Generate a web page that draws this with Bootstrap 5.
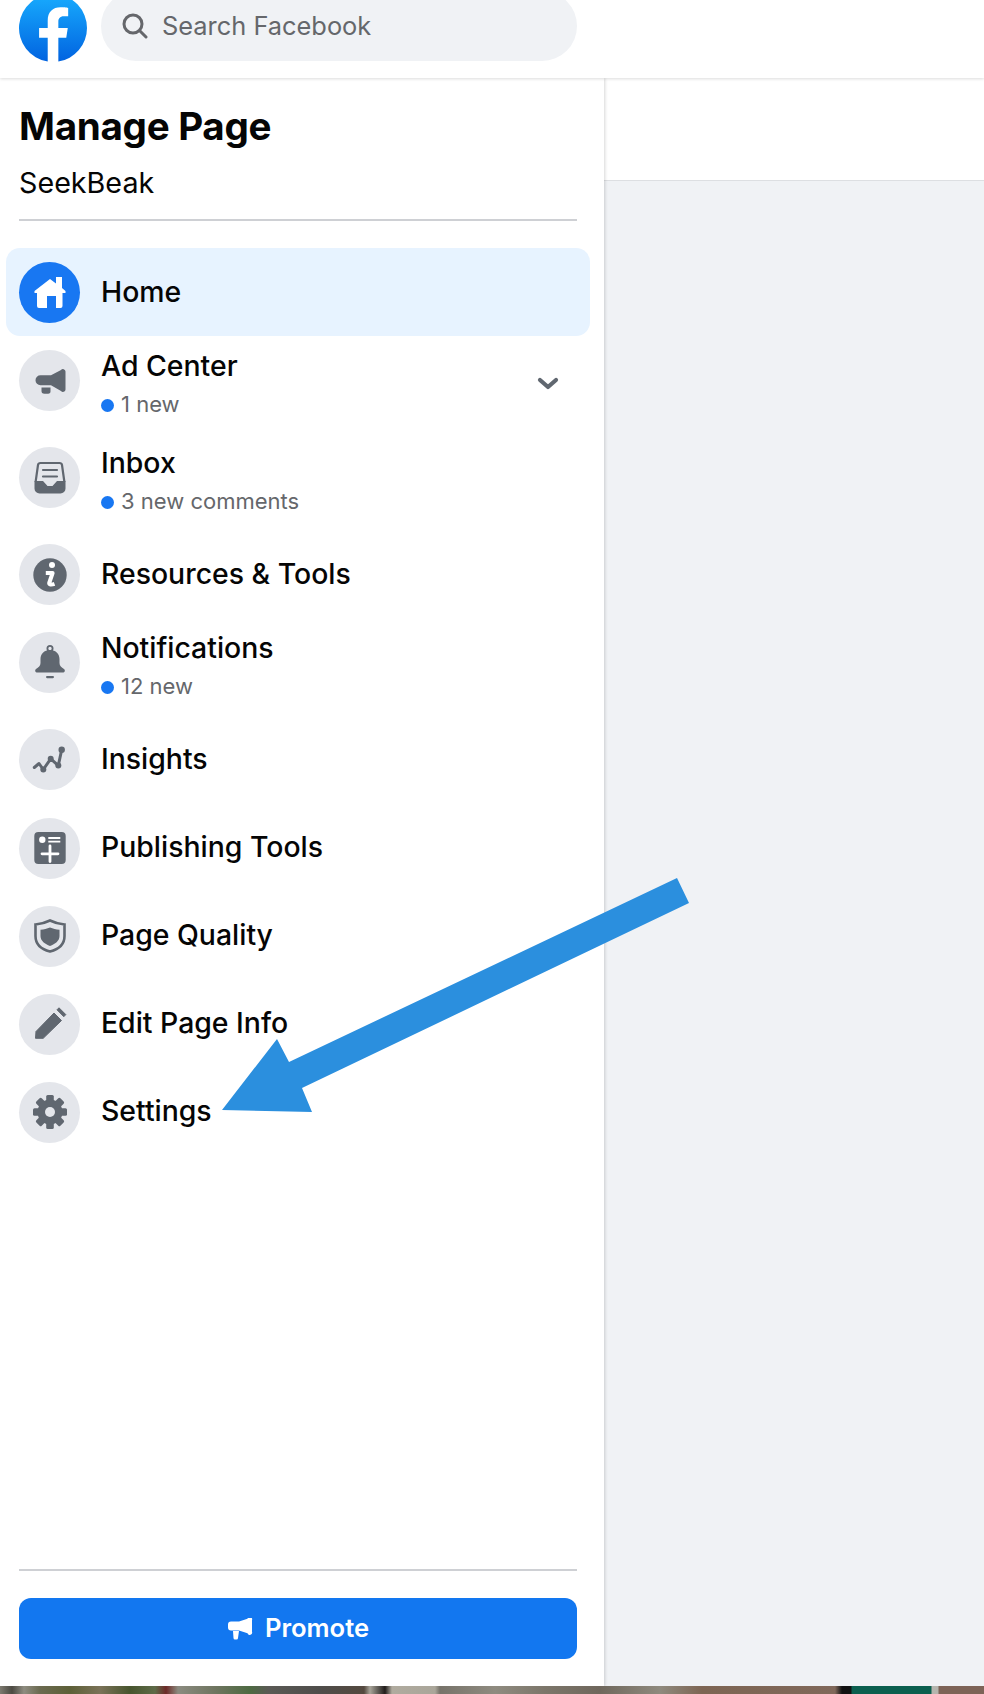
<!DOCTYPE html>
<html lang="en">
<head>
<meta charset="utf-8">
<title>Manage Page</title>
<link href="https://cdn.jsdelivr.net/npm/bootstrap@5.3.0/dist/css/bootstrap.min.css" rel="stylesheet">
<style>
html,body{height:100%;}
body{font-family:"Inter","Liberation Sans",sans-serif;background:#f0f2f5;color:#050505;}
.fb-page{height:1694px;overflow:hidden;}
.fb-top{height:78px;background:#fff;box-shadow:0 1px 3px rgba(0,0,0,.14);z-index:3;padding-left:19px;overflow:hidden;flex:none;}
.fb-logo{width:68px;height:68px;margin-top:-6px;flex:none;}
.fb-search{width:476px;height:70px;margin-top:-9px;margin-left:14px;background:#f0f2f5;padding-left:21px;gap:14px;color:#65676b;font-size:25.4px;}
.fb-side{width:604px;background:#fff;box-shadow:1px 0 3px rgba(0,0,0,.16);z-index:2;padding:0 14px 27px 6px;flex:none;}
.fb-title{font-size:38.6px;line-height:44px;font-weight:700;margin:26px 0 0 13px;letter-spacing:-.3px;}
.fb-sub{font-size:28.7px;line-height:32px;margin:19px 0 0 13px;}
.fb-rule{height:2px;background:#ced0d4;margin:0 13px;flex:none;}
.fb-rule-head{margin-top:20px;margin-bottom:27px;}
.fb-row{padding:14px 13px 13.1px;gap:21px;font-size:28.4px;font-weight:450;line-height:32px;}
.fb-label{padding-bottom:2px;}
.fb-row.is-on{background:#e7f3ff;border-radius:14px;}
.fb-ico{width:61px;height:61px;border-radius:50%;background:#e4e6eb;flex:none;color:#606770;}
.is-on .fb-ico{background:#1877f2;color:#fff;}
.fb-note{font-size:22px;font-weight:400;line-height:33px;margin-top:6px;margin-bottom:-1px;color:#65676b;gap:7px;}
.fb-dot{width:13px;height:13px;border-radius:50%;background:#1877f2;flex:none;margin-top:2px;}
.fb-chev{margin-right:18px;margin-top:-2px;}
.fb-promote{height:61px;margin:27px 13px 0;background:#1277f0;border:0;border-radius:12px;font-size:25.6px;font-weight:600;gap:12px;flex:none;}
.fb-promote:hover{background:#1277f0;}
.fb-bar{height:103px;background:#fff;border-bottom:1px solid #dddfe2;}
.fb-strip{height:8px;flex:none;z-index:4;background:linear-gradient(90deg,#7d7a70 0,#4c4a42 12px,#8e8c80 24px,#6b6a50 40px,#5d6038 70px,#7b7258 100px,#47552e 130px,#5e6b48 155px,#6d2a28 166px,#8b8b80 178px,#6f7560 215px,#4e6a42 250px,#5a5a55 268px,#4f4d4b 320px,#54493f 364px,#a8a499 370px,#201c1a 385px,#b0ab9f 392px,#aaa69a 435px,#77736a 440px,#8f8b80 495px,#7c766a 545px,#6f675c 600px,#8f8a7e 660px,#7d6553 702px,#80685a 835px,#111 842px,#111 851px,#0b5f4f 852px,#0b5f4f 931px,#b5b5ae 932px,#b5b5ae 938px,#7d6357 939px,#7d6357 984px);}
.fb-fill{min-height:0;}
.fb-arrow{position:absolute;left:0;top:0;z-index:5;pointer-events:none;}
</style>
</head>
<body>
<div class="fb-page d-flex flex-column position-relative">
  <header class="fb-top d-flex align-items-start position-relative">
    <svg class="fb-logo" viewBox="0 0 36 36" role="img" aria-label="Facebook"><defs><linearGradient id="fbg" x1="0" y1="0" x2="0" y2="1"><stop offset="0" stop-color="#18acfe"/><stop offset="1" stop-color="#0163e0"/></linearGradient></defs><path fill="url(#fbg)" d="M36 18a18 18 0 1 0-20.8 17.78V23.2h-4.57V18h4.57v-3.96c0-4.51 2.69-7 6.8-7 1.97 0 4.03.35 4.03.35v4.43h-2.27c-2.24 0-2.93 1.39-2.93 2.81V18h4.99l-.8 5.2h-4.19v12.58A18 18 0 0 0 36 18z"/></svg>
    <div class="fb-search d-flex align-items-center rounded-pill">
      <svg width="26" height="26" viewBox="0 0 26 26" fill="none" stroke="#65676b" stroke-width="3" stroke-linecap="round"><circle cx="11" cy="11" r="9"/><path d="M18 18l6 6"/></svg>
      <span>Search Facebook</span>
    </div>
  </header>
  <div class="d-flex flex-grow-1 fb-fill">
    <aside class="fb-side d-flex flex-column">
      <div class="fb-title">Manage Page</div>
      <div class="fb-sub">SeekBeak</div>
      <div class="fb-rule fb-rule-head"></div>
      <div class="d-flex align-items-center fb-row is-on">
        <span class="fb-ico d-flex align-items-center justify-content-center"><svg width="36" height="36" viewBox="-18 -18 36 36" fill="currentColor"><path d="M0-14 6-9.500V-16h6v11l3.500 3V0h-3v13a2 2 0 0 1-2 2H6V3H-3v12h-8a2 2 0 0 1-2-2V0h-2.500v-2z"/></svg></span>
        <span class="fb-label">Home</span>
      </div>
      <div class="d-flex align-items-start fb-row">
        <span class="fb-ico d-flex align-items-center justify-content-center"><svg width="36" height="36" viewBox="-18 -18 36 36" fill="currentColor"><path d="M-14.500-.7a5 5 0 0 1 5-5H1l10-5.200a2.500 2.500 0 0 1 4.500 1.500V8.500a2.500 2.500 0 0 1-4.500 1.500L1 4.300H-9.500a5 5 0 0 1-5-5z"/><path d="M-8.500 6.500h9V10A2.500 2.500 0 0 1-2 12.700h-3.500A3 3 0 0 1-8.500 9.500z"/></svg></span>
        <div class="flex-grow-1">
          <div>Ad Center</div>
          <div class="fb-note d-flex align-items-center"><span class="fb-dot"></span><span>1 new</span></div>
        </div>
        <svg class="align-self-center fb-chev" width="22" height="14" viewBox="0 0 22 14" fill="none" stroke="#606770" stroke-width="4.200" stroke-linecap="round" stroke-linejoin="round"><path d="M3 3l8 7 8-7"/></svg>
      </div>
      <div class="d-flex align-items-start fb-row">
        <span class="fb-ico d-flex align-items-center justify-content-center"><svg width="36" height="36" viewBox="-18 -18 36 36" fill="none" stroke="currentColor" stroke-width="2.200"><path d="M-14.400 4-12-13a2.500 2.500 0 0 1 2.500-2H9.500a2.500 2.500 0 0 1 2.500 2l2.400 17"/><path d="M-7-8H7M-7-1.500H7" stroke-linecap="round"/><path stroke="none" fill="currentColor" d="M-15.500 3H-7l4.500 5h5L7 3h8.500v7.500a5 5 0 0 1-5 5h-21a5 5 0 0 1-5-5z"/></svg></span>
        <div class="flex-grow-1">
          <div>Inbox</div>
          <div class="fb-note d-flex align-items-center"><span class="fb-dot"></span><span>3 new comments</span></div>
        </div>
      </div>
      <div class="d-flex align-items-center fb-row">
        <span class="fb-ico d-flex align-items-center justify-content-center"><svg width="36" height="36" viewBox="-18 -18 36 36"><circle r="16.700" fill="currentColor"/><circle cx="2" cy="-10" r="3" fill="#fff"/><path d="M-4.200-2H2.600L-.8 8c-.4 1.600 2 2 5.300.8" fill="none" stroke="#fff" stroke-width="4" stroke-linejoin="round"/></svg></span>
        <span class="fb-label">Resources &amp; Tools</span>
      </div>
      <div class="d-flex align-items-start fb-row">
        <span class="fb-ico d-flex align-items-center justify-content-center"><svg width="36" height="36" viewBox="-18 -18 36 36" fill="currentColor"><circle cy="-14.500" r="2.600" fill="none" stroke="currentColor" stroke-width="1.800"/><path d="M0-13c-6 0-9.500 4-9.500 9v4c0 3-2 4-4.500 6-1.500 1.500-1 3.500 1.500 3.500h25c2.500 0 3-2 1.500-3.500-2.500-2-4.500-3-4.500-6v-4c0-5-3.500-9-9.500-9z"/><rect x="-4" y="13" width="8" height="2.200" rx="1.100"/></svg></span>
        <div class="flex-grow-1">
          <div>Notifications</div>
          <div class="fb-note d-flex align-items-center"><span class="fb-dot"></span><span>12 new</span></div>
        </div>
      </div>
      <div class="d-flex align-items-center fb-row">
        <span class="fb-ico d-flex align-items-center justify-content-center"><svg width="36" height="36" viewBox="-18 -18 36 36" fill="currentColor"><path d="M-15.700 7.500-11 3.500-6.700 9.500.7-1.200 8.300 5.500 11.700-10.200" fill="none" stroke="currentColor" stroke-width="3" stroke-linejoin="round" stroke-linecap="round"/><circle cx="-6.700" cy="9.500" r="3"/><circle cx=".7" cy="-1.200" r="3"/><circle cx="8.300" cy="5.500" r="3"/><circle cx="11.700" cy="-10.200" r="3.200"/></svg></span>
        <span class="fb-label">Insights</span>
      </div>
      <div class="d-flex align-items-center fb-row">
        <span class="fb-ico d-flex align-items-center justify-content-center"><svg width="36" height="36" viewBox="-18 -18 36 36"><rect x="-15.700" y="-16" width="31.400" height="32" rx="4" fill="currentColor"/><circle cx="-7.700" cy="-8.300" r="3.200" fill="#fff"/><path d="M-1.700-10H10.300M-1.700-6.300H10.300" stroke="#fff" stroke-width="1.800"/><path d="M0-2V13.500M-8 5.800H8" stroke="#fff" stroke-width="2.800" stroke-linecap="round"/></svg></span>
        <span class="fb-label">Publishing Tools</span>
      </div>
      <div class="d-flex align-items-center fb-row">
        <span class="fb-ico d-flex align-items-center justify-content-center"><svg width="36" height="36" viewBox="-18 -18 36 36" fill="currentColor"><path d="M0-15.500C4-13.500 9-12 14.500-11.500V0C14.500 8.500 8 13.500 0 15.500-8 13.500-14.500 8.500-14.500 0V-11.500C-9-12-4-13.500 0-15.500z" fill="none" stroke="currentColor" stroke-width="2.600"/><path d="M0-8.500C3-7.500 6-6.500 9.500-6.200V0C9.500 5 5 8 0 10-5 8-9.500 5-9.500 0V-6.200C-6-6.500-3-7.500 0-8.500z"/></svg></span>
        <span class="fb-label">Page Quality</span>
      </div>
      <div class="d-flex align-items-center fb-row">
        <span class="fb-ico d-flex align-items-center justify-content-center"><svg width="36" height="36" viewBox="-18 -18 36 36" fill="currentColor" stroke="currentColor" stroke-width="1" stroke-linejoin="round"><path d="M-14.500 14.300-14 7.500 4-11l7.500 7.500L-6.800 14.300z"/><path d="M7-14.200 9-16.200 15.800-9.400 13.800-7.300z"/></svg></span>
        <span class="fb-label">Edit Page Info</span>
      </div>
      <div class="d-flex align-items-center fb-row">
        <span class="fb-ico d-flex align-items-center justify-content-center"><svg width="36" height="36" viewBox="-18 -18 36 36" fill="currentColor"><circle r="12.500"/><g><rect x="-3.800" y="-17" width="7.600" height="34" rx="1.500"/><rect x="-3.800" y="-17" width="7.600" height="34" rx="1.500" transform="rotate(45)"/><rect x="-3.800" y="-17" width="7.600" height="34" rx="1.500" transform="rotate(90)"/><rect x="-3.800" y="-17" width="7.600" height="34" rx="1.500" transform="rotate(135)"/></g><circle r="5" fill="#e4e6eb"/></svg></span>
        <span class="fb-label">Settings</span>
      </div>
      <div class="fb-rule mt-auto"></div>
      <button type="button" class="btn btn-primary fb-promote d-flex align-items-center justify-content-center">
        <svg width="26" height="22" viewBox="0 0 26 22" fill="#fff"><path d="M1 6.500A3 3 0 0 1 4 3.500H12L20.500 .7A2 2 0 0 1 25 2.200V13.800A2 2 0 0 1 20.500 15.300L12 12.500H4A3 3 0 0 1 1 9.500z"/><path d="M6 13h6l-1 7a1.500 1.500 0 0 1-1.500 1.500H8A1.500 1.500 0 0 1 6.500 20z"/></svg>
        <span>Promote</span>
      </button>
    </aside>
    <main class="flex-grow-1"><div class="fb-bar"></div></main>
  </div>
  <div class="fb-strip position-relative"></div>
  <svg class="fb-arrow" width="984" height="1694" viewBox="0 0 984 1694"><path fill="#2b8fde" d="M677 878 689 903 302 1088 312 1112 222 1110 277 1039 289 1062z"/></svg>
</div>
<script src="https://cdn.jsdelivr.net/npm/bootstrap@5.3.0/dist/js/bootstrap.bundle.min.js"></script>
</body>
</html>
